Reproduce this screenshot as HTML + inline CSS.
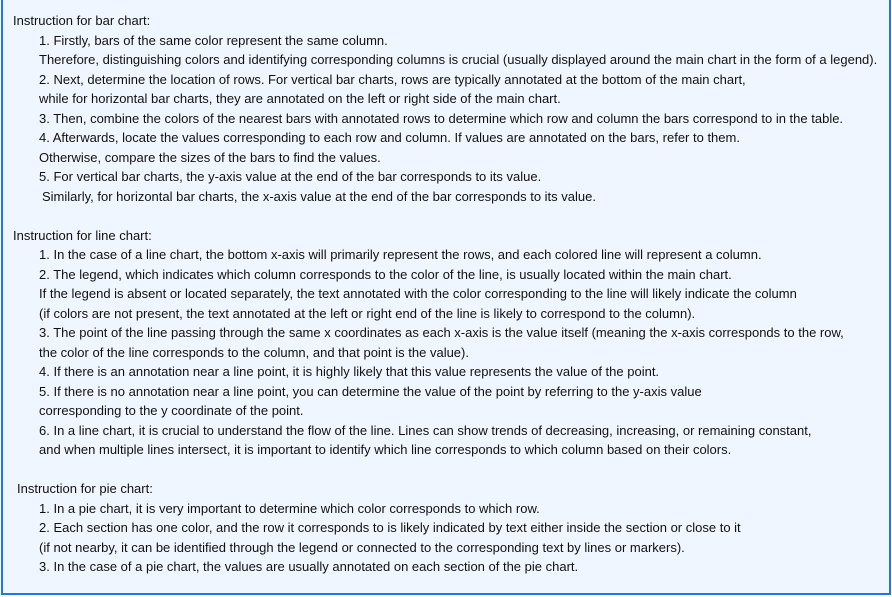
<!DOCTYPE html>
<html><head><meta charset="utf-8"><style>
html,body{margin:0;padding:0;background:#fff;}
.box{position:absolute;left:1px;top:-3px;width:886px;height:594px;border:2px solid #1f78e6;background:#f0f6ff;box-sizing:content-box;}
.t{position:absolute;left:0;top:11px;width:890px;font-family:"Liberation Sans",sans-serif;font-size:13px;line-height:19.5px;color:#111;white-space:nowrap;}
.t div{height:19.5px;}
.h{padding-left:13px}.i{padding-left:39px}
</style></head><body>
<div class="box"></div>
<div class="t">
<div class="h">Instruction for bar chart:</div>
<div class="i">1. Firstly, bars of the same color represent the same column.</div>
<div class="i">Therefore, distinguishing colors and identifying corresponding columns is crucial (usually displayed around the main chart in the form of a legend).</div>
<div class="i">2. Next, determine the location of rows. For vertical bar charts, rows are typically annotated at the bottom of the main chart,</div>
<div class="i">while for horizontal bar charts, they are annotated on the left or right side of the main chart.</div>
<div class="i">3. Then, combine the colors of the nearest bars with annotated rows to determine which row and column the bars correspond to in the table.</div>
<div class="i">4. Afterwards, locate the values corresponding to each row and column. If values are annotated on the bars, refer to them.</div>
<div class="i">Otherwise, compare the sizes of the bars to find the values.</div>
<div class="i">5. For vertical bar charts, the y-axis value at the end of the bar corresponds to its value.</div>
<div class="i" style="padding-left:42px">Similarly, for horizontal bar charts, the x-axis value at the end of the bar corresponds to its value.</div>
<div></div>
<div class="h">Instruction for line chart:</div>
<div class="i">1. In the case of a line chart, the bottom x-axis will primarily represent the rows, and each colored line will represent a column.</div>
<div class="i">2. The legend, which indicates which column corresponds to the color of the line, is usually located within the main chart.</div>
<div class="i">If the legend is absent or located separately, the text annotated with the color corresponding to the line will likely indicate the column</div>
<div class="i">(if colors are not present, the text annotated at the left or right end of the line is likely to correspond to the column).</div>
<div class="i">3. The point of the line passing through the same x coordinates as each x-axis is the value itself (meaning the x-axis corresponds to the row,</div>
<div class="i">the color of the line corresponds to the column, and that point is the value).</div>
<div class="i">4. If there is an annotation near a line point, it is highly likely that this value represents the value of the point.</div>
<div class="i">5. If there is no annotation near a line point, you can determine the value of the point by referring to the y-axis value</div>
<div class="i">corresponding to the y coordinate of the point.</div>
<div class="i">6. In a line chart, it is crucial to understand the flow of the line. Lines can show trends of decreasing, increasing, or remaining constant,</div>
<div class="i">and when multiple lines intersect, it is important to identify which line corresponds to which column based on their colors.</div>
<div></div>
<div class="h" style="padding-left:17px">Instruction for pie chart:</div>
<div class="i">1. In a pie chart, it is very important to determine which color corresponds to which row.</div>
<div class="i">2. Each section has one color, and the row it corresponds to is likely indicated by text either inside the section or close to it</div>
<div class="i">(if not nearby, it can be identified through the legend or connected to the corresponding text by lines or markers).</div>
<div class="i">3. In the case of a pie chart, the values are usually annotated on each section of the pie chart.</div>
</div>
</body></html>
